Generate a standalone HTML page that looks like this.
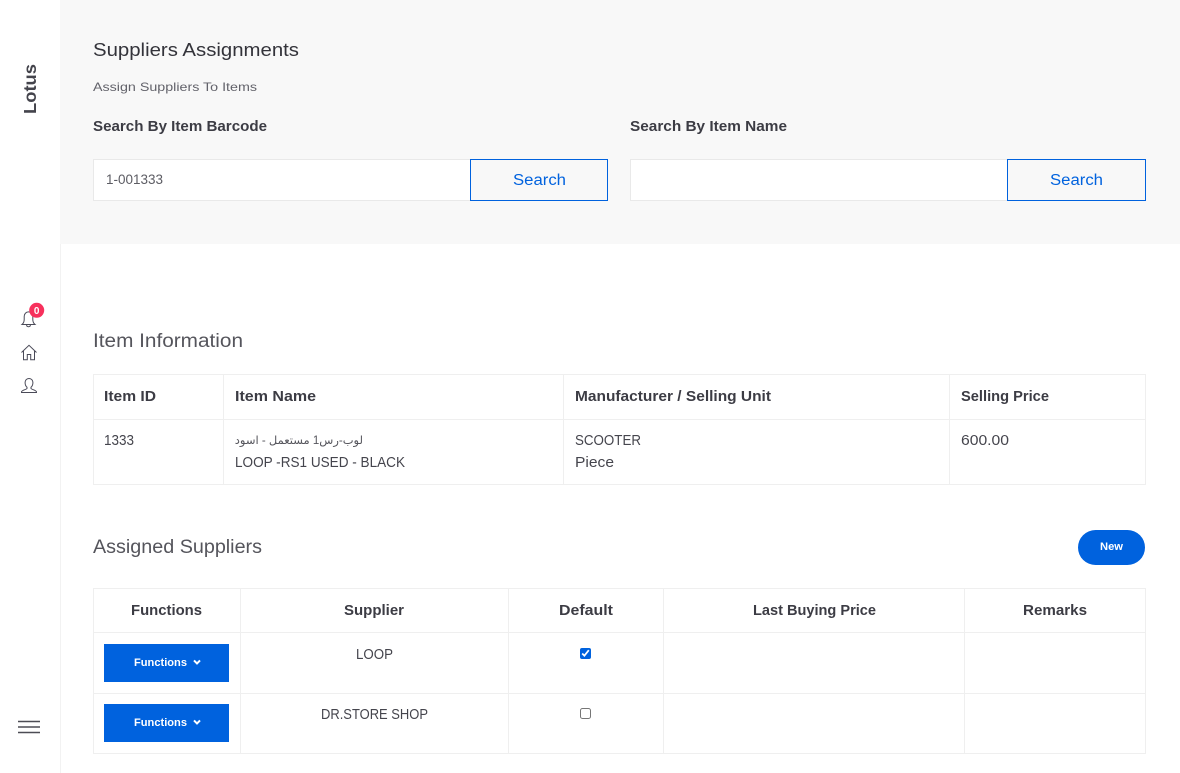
<!DOCTYPE html>
<html lang="en"><head><meta charset="utf-8"><title>Suppliers Assignments</title>
<style>
html,body{margin:0;padding:0;width:1180px;height:773px;overflow:hidden;background:#fff}
.b{position:absolute;box-sizing:border-box}
svg{position:absolute;left:0;top:0}
text{font-family:"Liberation Sans","DejaVu Sans",sans-serif;fill:#45454d}
.sb{font-weight:700;fill:#3c3c44}
.w{font-weight:700;fill:#fff}
input[type=checkbox]{position:absolute;margin:0;width:11px;height:11px}
</style></head><body>
<div class="b" style="left:60px;top:0;width:1px;height:773px;background:#f2f2f2"></div>
<div class="b" style="left:60px;top:0;width:1120px;height:244px;background:#f8f8f8"></div>

<div class="b" style="left:93px;top:159px;width:378px;height:42px;background:#fff;border:1px solid #e9e9e9"></div>
<div class="b" style="left:470px;top:159px;width:138px;height:42px;background:#f8f8f8;border:1px solid #0062de"></div>
<div class="b" style="left:630px;top:159px;width:378px;height:42px;background:#fff;border:1px solid #e9e9e9"></div>
<div class="b" style="left:1007px;top:159px;width:139px;height:42px;background:#f8f8f8;border:1px solid #0062de"></div>

<!-- table 1 -->
<div class="b" style="left:93px;top:374px;width:1053px;height:111px;border:1px solid #efefef"></div>
<div class="b" style="left:93px;top:419px;width:1053px;height:1px;background:#efefef"></div>
<div class="b" style="left:223px;top:374px;width:1px;height:111px;background:#efefef"></div>
<div class="b" style="left:563px;top:374px;width:1px;height:111px;background:#efefef"></div>
<div class="b" style="left:949px;top:374px;width:1px;height:111px;background:#efefef"></div>

<!-- table 2 -->
<div class="b" style="left:93px;top:588px;width:1053px;height:166px;border:1px solid #efefef"></div>
<div class="b" style="left:93px;top:632px;width:1053px;height:1px;background:#efefef"></div>
<div class="b" style="left:93px;top:693px;width:1053px;height:1px;background:#efefef"></div>
<div class="b" style="left:240px;top:588px;width:1px;height:166px;background:#efefef"></div>
<div class="b" style="left:508px;top:588px;width:1px;height:166px;background:#efefef"></div>
<div class="b" style="left:663px;top:588px;width:1px;height:166px;background:#efefef"></div>
<div class="b" style="left:964px;top:588px;width:1px;height:166px;background:#efefef"></div>

<div class="b" style="left:104px;top:644px;width:125px;height:38px;background:#0062de"></div>
<div class="b" style="left:104px;top:704px;width:125px;height:38px;background:#0062de"></div>
<div class="b" style="left:1078px;top:530px;width:67px;height:35px;border-radius:18px;background:#0062de"></div>

<input type="checkbox" checked style="left:580px;top:648px;accent-color:#0062de">
<input type="checkbox" style="left:580px;top:708px">

<svg width="1180" height="773" viewBox="0 0 1180 773">
<text x="93" y="56" font-size="18.500" textLength="206" lengthAdjust="spacingAndGlyphs" style="fill:#33333a">Suppliers Assignments</text>
<text x="93" y="91" font-size="12" textLength="164" lengthAdjust="spacingAndGlyphs" style="fill:#62626a">Assign Suppliers To Items</text>
<text class="sb" x="93" y="131" font-size="14.500" textLength="174" lengthAdjust="spacingAndGlyphs">Search By Item Barcode</text>
<text class="sb" x="630" y="131" font-size="14.500" textLength="157" lengthAdjust="spacingAndGlyphs">Search By Item Name</text>
<text x="106" y="184" font-size="13.500" textLength="57" lengthAdjust="spacingAndGlyphs" style="fill:#5c5c63">1-001333</text>
<text x="513" y="185" font-size="15.500" textLength="53" lengthAdjust="spacingAndGlyphs" style="fill:#0062de">Search</text>
<text x="1050" y="185" font-size="15.500" textLength="53" lengthAdjust="spacingAndGlyphs" style="fill:#0062de">Search</text>

<text x="93" y="347" font-size="19" textLength="150" lengthAdjust="spacingAndGlyphs" style="fill:#55555c">Item Information</text>
<text class="sb" x="104" y="401" font-size="14.500" textLength="52" lengthAdjust="spacingAndGlyphs">Item ID</text>
<text class="sb" x="235" y="401" font-size="14.500" textLength="81" lengthAdjust="spacingAndGlyphs">Item Name</text>
<text class="sb" x="575" y="401" font-size="14.500" textLength="196" lengthAdjust="spacingAndGlyphs">Manufacturer / Selling Unit</text>
<text class="sb" x="961" y="401" font-size="14.500" textLength="88" lengthAdjust="spacingAndGlyphs">Selling Price</text>
<text x="104" y="445" font-size="14.500" textLength="30" lengthAdjust="spacingAndGlyphs">1333</text>
<text x="363" y="444" font-size="11.500" direction="rtl" style="fill:#55555c">لوب-رس1 مستعمل - اسود</text>
<text x="235" y="467" font-size="14.500" textLength="170" lengthAdjust="spacingAndGlyphs">LOOP -RS1 USED - BLACK</text>
<text x="575" y="445" font-size="14.500" textLength="66" lengthAdjust="spacingAndGlyphs">SCOOTER</text>
<text x="575" y="467" font-size="14.500" textLength="39" lengthAdjust="spacingAndGlyphs">Piece</text>
<text x="961" y="445" font-size="14.500" textLength="48" lengthAdjust="spacingAndGlyphs">600.00</text>

<text x="93" y="553" font-size="19" textLength="169" lengthAdjust="spacingAndGlyphs" style="fill:#55555c">Assigned Suppliers</text>
<text class="w" x="1100" y="550" font-size="11" textLength="23" lengthAdjust="spacingAndGlyphs">New</text>

<text class="sb" x="131" y="615" font-size="14.500" textLength="71" lengthAdjust="spacingAndGlyphs">Functions</text>
<text class="sb" x="344" y="615" font-size="14.500" textLength="60" lengthAdjust="spacingAndGlyphs">Supplier</text>
<text class="sb" x="559" y="615" font-size="14.500" textLength="54" lengthAdjust="spacingAndGlyphs">Default</text>
<text class="sb" x="753" y="615" font-size="14.500" textLength="123" lengthAdjust="spacingAndGlyphs">Last Buying Price</text>
<text class="sb" x="1023" y="615" font-size="14.500" textLength="64" lengthAdjust="spacingAndGlyphs">Remarks</text>

<text x="356" y="659" font-size="14.500" textLength="37" lengthAdjust="spacingAndGlyphs">LOOP</text>
<text x="321" y="719" font-size="14.500" textLength="107" lengthAdjust="spacingAndGlyphs">DR.STORE SHOP</text>

<text class="w" x="134" y="666" font-size="11" textLength="53" lengthAdjust="spacingAndGlyphs">Functions</text>
<text class="w" x="134" y="726" font-size="11" textLength="53" lengthAdjust="spacingAndGlyphs">Functions</text>
<path d="M194 660.400 197 663.400 200 660.400" fill="none" stroke="#fff" stroke-width="2"/>
<path d="M194 720.400 197 723.400 200 720.400" fill="none" stroke="#fff" stroke-width="2"/>

<text transform="translate(36 114) rotate(-90)" font-size="17.500" textLength="50" lengthAdjust="spacingAndGlyphs" style="font-weight:700;fill:#44444c">Lotus</text>

<!-- bell -->
<path d="M22 324.500c1.500-1.200 2.200-2.600 2.200-5v-3c0-2.600 1.800-4.600 4.300-4.600s4.300 2 4.300 4.600v3c0 2.400.7 3.800 2.200 5zM26.600 324.800c0 2.600 3.800 2.600 3.800 0" fill="none" stroke="#4a4a58" stroke-width="1"/>
<circle cx="36.700" cy="310.300" r="7.500" fill="#f7305c"/>
<text x="36.700" y="313.800" font-size="10" text-anchor="middle" style="fill:#fff;font-weight:700">0</text>
<!-- home -->
<path d="M21.500 352.500 29 345.300l7.500 7.200M23.500 351v8.800h3.800v-5.300h3.400v5.300h3.800V351" fill="none" stroke="#4a4a58" stroke-width="1"/>
<!-- user -->
<path d="M29 378.500c-2.400 0-3.900 1.800-3.900 4.200 0 2 .8 3.600 1.900 4.600v1.200c-.8 1.200-4.600 1.400-5.500 3.300v.7h15v-.7c-.9-1.900-4.700-2.100-5.500-3.300v-1.200c1.100-1 1.900-2.600 1.900-4.600 0-2.400-1.500-4.200-3.900-4.200z" fill="none" stroke="#4a4a58" stroke-width="1"/>
<!-- hamburger -->
<path d="M18 721.500H40M18 727H40M18 732.500H40" fill="none" stroke="#4d4d55" stroke-width="1.600"/>
</svg>
</body></html>
